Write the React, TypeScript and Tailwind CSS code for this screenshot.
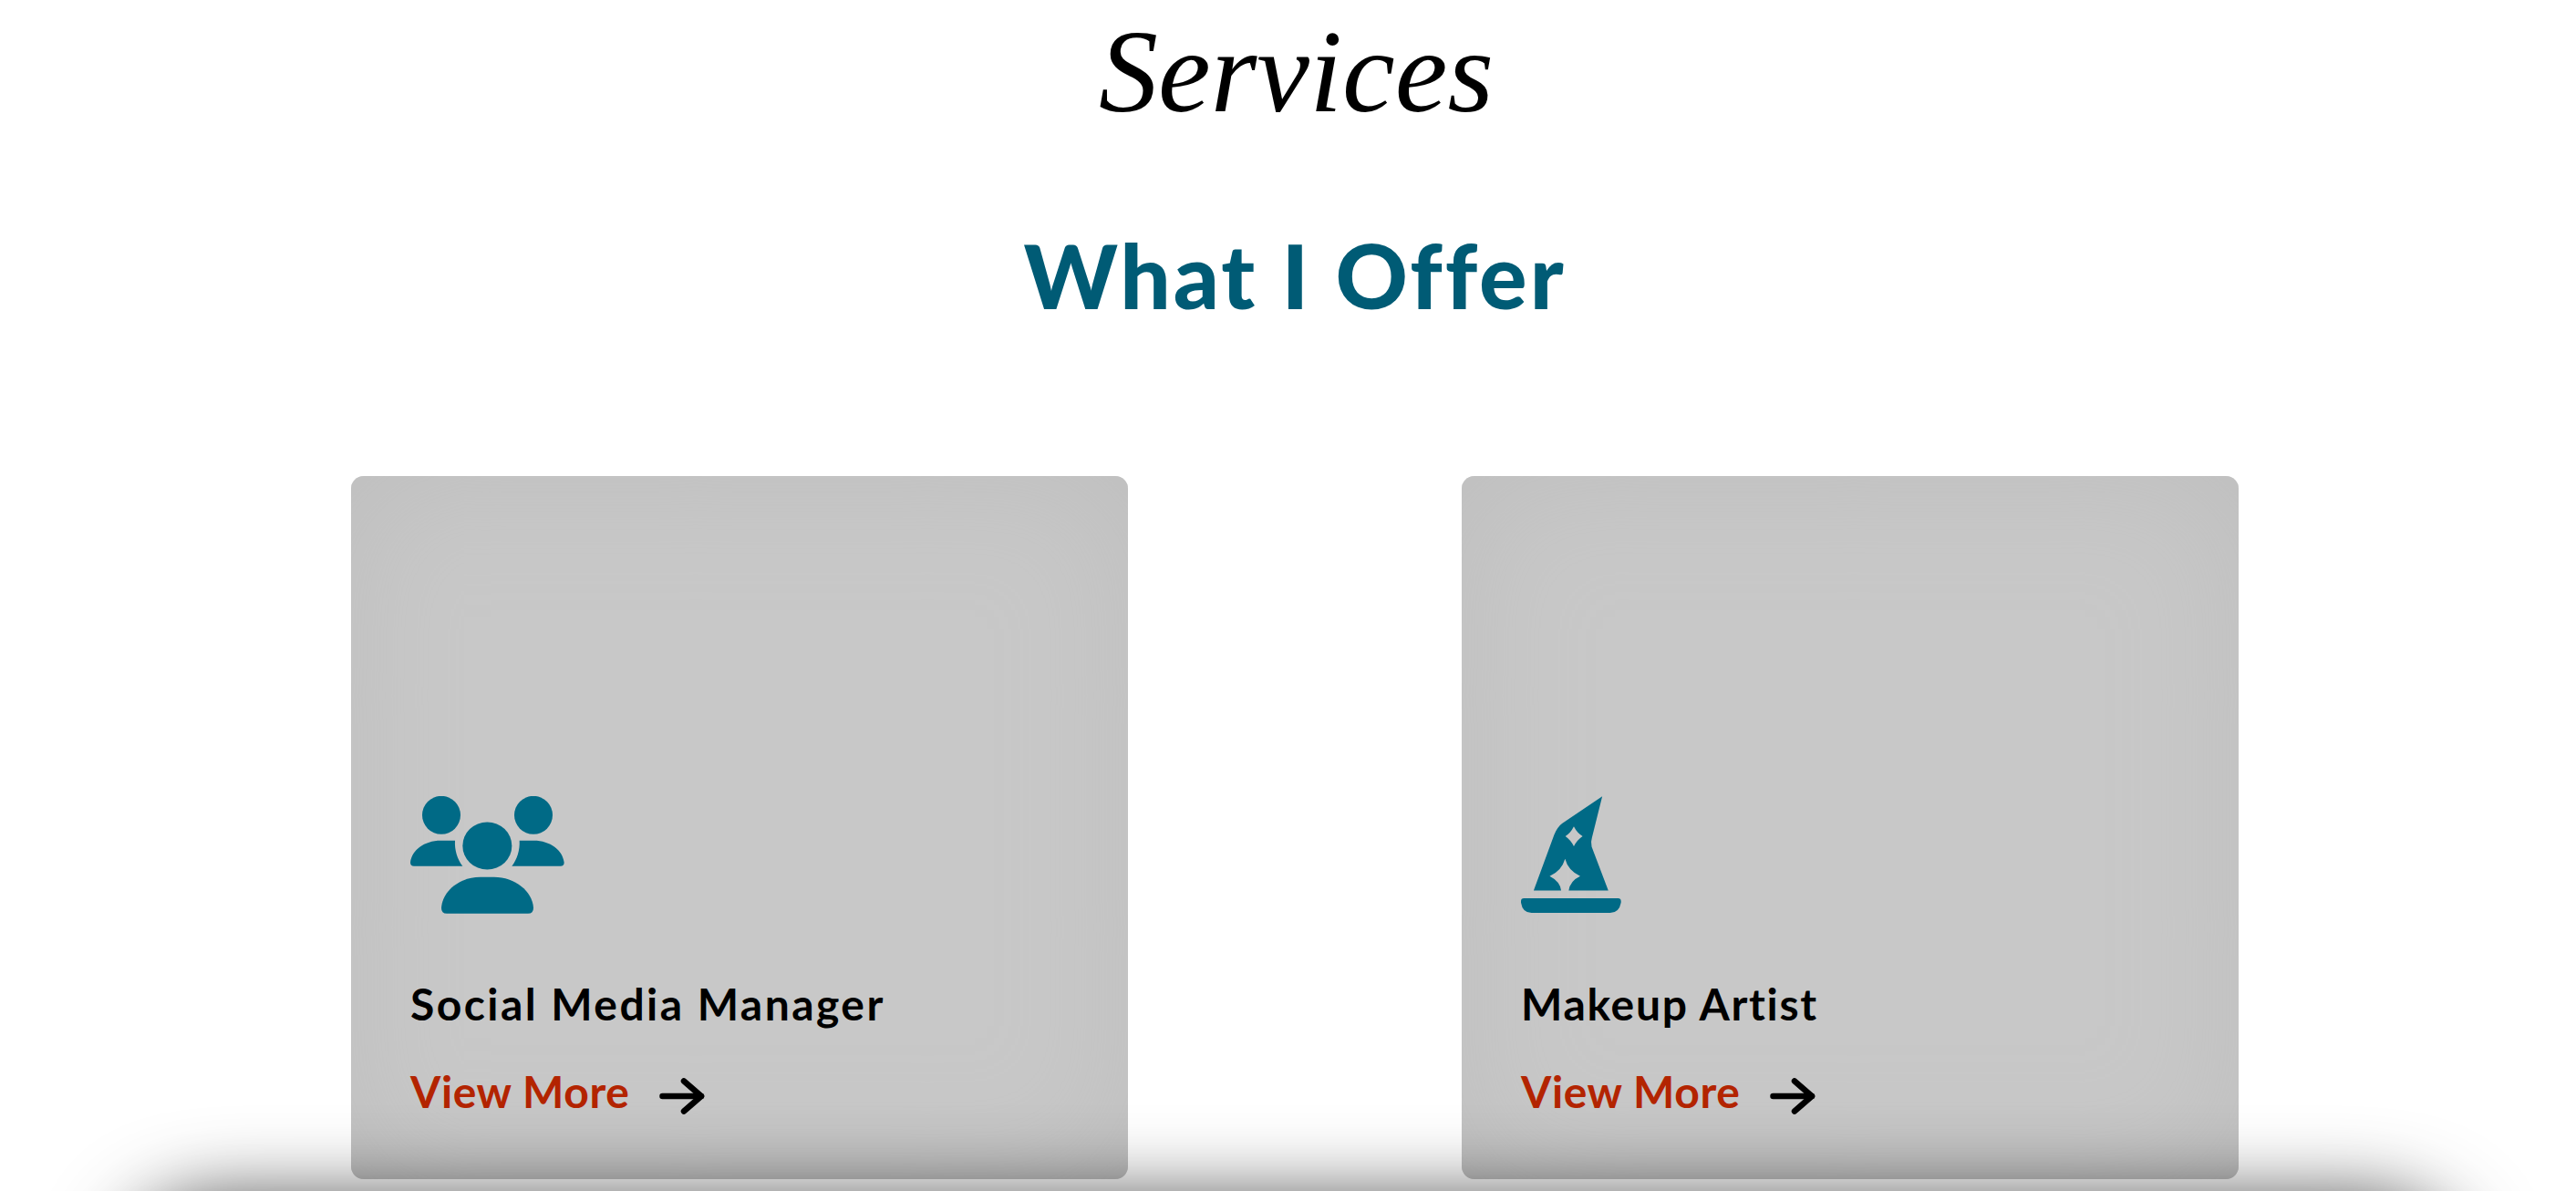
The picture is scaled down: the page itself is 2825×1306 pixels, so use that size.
function PeopleIcon() {
  return (
    <svg viewBox="240 97 507 386" className="h-[129px] w-[169px]" fill="#006a86">
      <circle cx="342" cy="159" r="63" />
      <circle cx="645" cy="159" r="63" />
      <ellipse cx="493" cy="260" rx="81" ry="78" />
      <path d="M240 315C245 275 285 243 340 243H387C385 275 395 305 412 327H252Q240 327 240 315Z" />
      <path d="M746 315C741 275 701 243 646 243H599C601 275 591 305 574 327H734Q746 327 746 315Z" />
      <path d="M342 465C345 410 400 363 470 363H515C585 363 642 410 645 465Q645 483 627 483H360Q342 483 342 465Z" />
    </svg>
  )
}

function HatIcon() {
  return (
    <svg viewBox="80 38 332 388" className="h-[129px] w-[110px]" fill="#006a86">
      <path
        fillRule="evenodd"
        d="M349 38L216 128Q200 140 190 165L122 350H369L314 205Q310 190 315 175ZM255 138Q266 160 284 170Q266 182 255 203Q244 182 227 170Q244 160 255 138ZM226 245Q236 284 276 302Q242 318 238 350H213Q210 320 175 302Q214 286 226 245Z"
      />
      <path d="M90 375H401Q411 375 411 385V390Q405 424 375 424H115Q85 424 80 390V385Q80 375 90 375Z" />
    </svg>
  )
}

function ArrowIcon() {
  return (
    <svg viewBox="0 0 50 40" className="ml-[33px] mt-[10px] h-[40px] w-[50px]" fill="none" stroke="#000" strokeWidth="6.5" strokeLinecap="round" strokeLinejoin="round">
      <path d="M3.5 20H46" />
      <path d="M27 3.5L46 20L27 36.5" />
    </svg>
  )
}

function ServiceCard({ title, titleClass, icon }: { title: string; titleClass: string; icon: React.ReactNode }) {
  return (
    <div className="flex h-[771px] w-[852px] flex-col justify-end rounded-[14px] bg-[#c8c8c8] pb-[66px] pl-[65px] shadow-[inset_0_0_140px_#bebebe]">
      {icon}
      <h3 className={`mt-[69px] text-[48px] leading-[60px] font-bold text-black ${titleClass}`}>{title}</h3>
      <a className="mt-[36px] flex items-center text-[48px] leading-[60px] font-bold tracking-[0.6px] text-[#b32400]">
        View More
        <ArrowIcon />
      </a>
    </div>
  )
}

export default function App() {
  return (
    <div className="relative h-[1306px] w-full overflow-hidden bg-white font-['Lato',sans-serif]">
      <h2 className="pt-[3px] pl-[18px] text-center font-['Liberation_Serif',serif] text-[130px] leading-[150px] text-black italic">Services</h2>
      <h1 className="mt-[93px] pl-[15px] text-center text-[98px] leading-[110px] font-black tracking-[3px] text-[#005b75]">What I Offer</h1>
      <div className="mt-[166px] flex gap-[366px] pl-[385px]">
        <ServiceCard title="Social Media Manager" titleClass="tracking-[2.45px]" icon={<PeopleIcon />} />
        <ServiceCard title="Makeup Artist" titleClass="tracking-[1.7px]" icon={<HatIcon />} />
      </div>
      {/* top of the next section, only its shadow shows */}
      <div className="absolute top-[1320px] right-[125px] left-[135px] h-[300px] rounded-[100px] bg-[#333] shadow-[0_0_90px_rgba(0,0,0,0.8)]" />
    </div>
  )
}
